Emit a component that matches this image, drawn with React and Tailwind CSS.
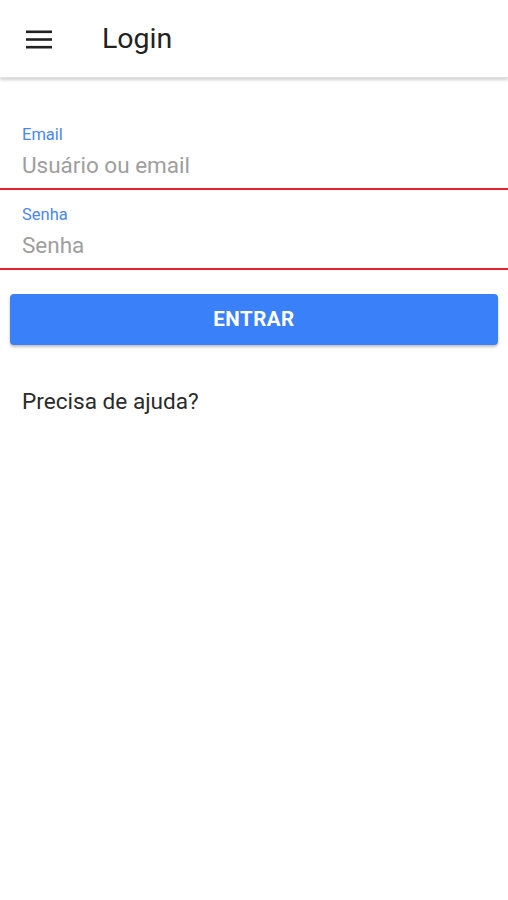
export default function App() {
  return (
    <div className="w-[508px] h-[900px] bg-white" style={{ fontFamily: 'Roboto, "Liberation Sans", sans-serif' }}>
      <header className="h-[78px] flex items-center bg-white shadow-[0_2px_3px_rgba(0,0,0,0.18)] border-b border-[#e2e2e2]">
        <div className="w-[102px] pl-[26px] flex items-center">
          <svg width="26" height="20" viewBox="0 0 26 20">
            <rect x="0" y="1.5" width="26" height="2.6" fill="#222" />
            <rect x="0" y="9.2" width="26" height="2.6" fill="#222" />
            <rect x="0" y="16.9" width="26" height="2.6" fill="#222" />
          </svg>
        </div>
        <h1 className="text-[28.5px] leading-[32px] text-[#222]">Login</h1>
      </header>

      <div className="pt-[49px]">
        <div className="border-b-2 border-[#e5212f] pl-[22px] pb-[10px]">
          <div className="text-[16.5px] leading-[16px] text-[#4a86f7]">Email</div>
          <div className="text-[22.5px] leading-[26px] mt-[9px] text-[#9e9e9e]">Usuário ou email</div>
        </div>
        <div className="border-b-2 border-[#e5212f] pl-[22px] pt-[17px] pb-[10px]">
          <div className="text-[16.5px] leading-[16px] text-[#4a86f7]">Senha</div>
          <div className="text-[22.5px] leading-[26px] mt-[9px] text-[#9e9e9e]">Senha</div>
        </div>
      </div>

      <div className="px-[10px] mt-[24px]">
        <button className="w-full h-[51px] rounded-[4px] bg-[#3a80f8] text-white font-bold text-[20.5px] tracking-[0.5px] shadow-[0_2px_3px_rgba(0,0,0,0.25)]">
          ENTRAR
        </button>
      </div>

      <div className="pl-[22px] mt-[44px] text-[22.6px] leading-[26px] text-[#2b2b2b]">Precisa de ajuda?</div>
    </div>
  );
}
